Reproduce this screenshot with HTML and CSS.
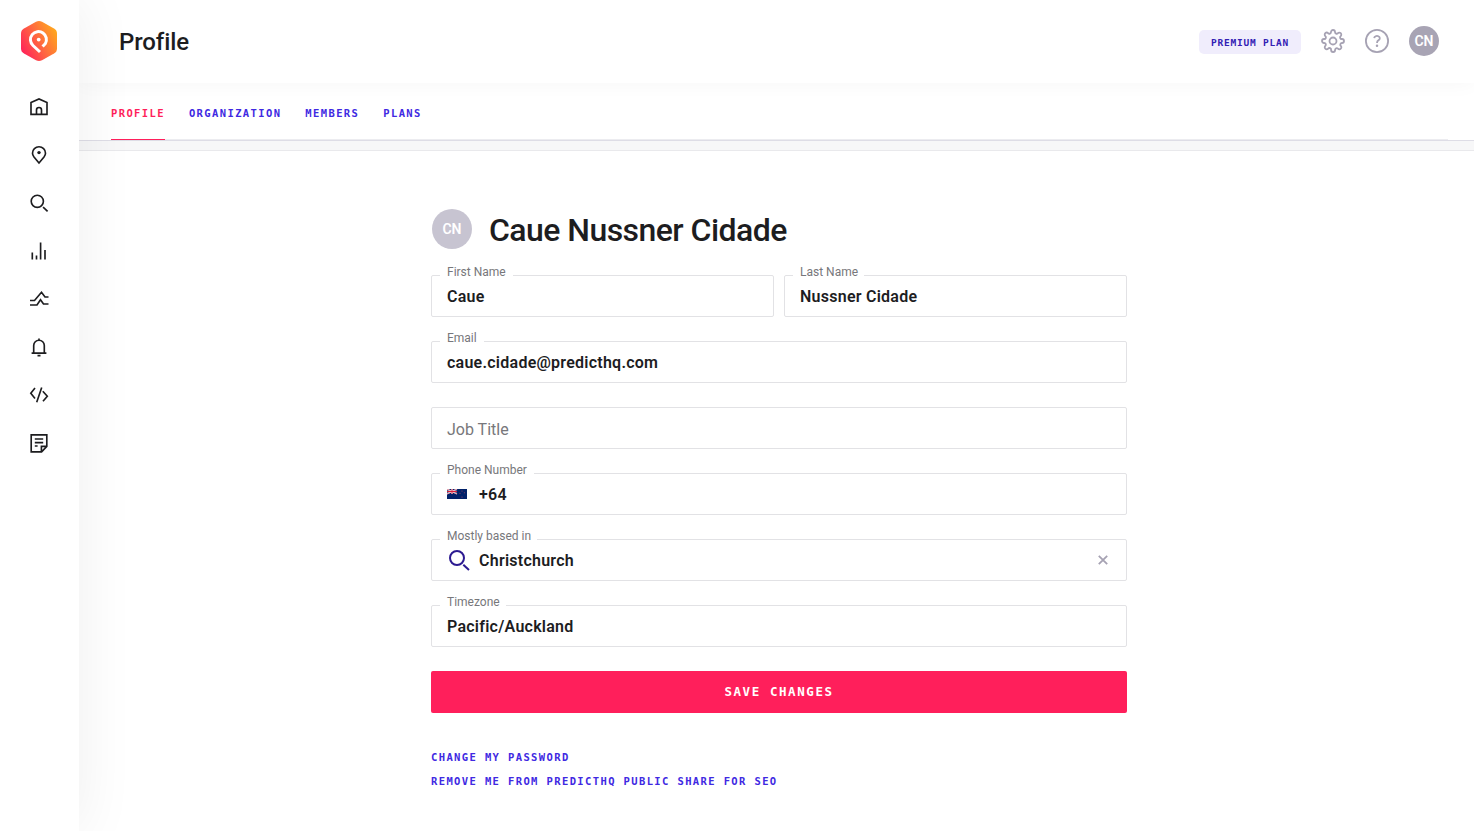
FILE: index.html
```html
<!DOCTYPE html>
<html lang="en">
<head>
<meta charset="utf-8">
<title>Profile</title>
<link rel="stylesheet" href="styles.css">
</head>
<body>
<div class="app">
  <aside class="sidebar">
    <svg class="logo" viewBox="0 0 36 40">
      <defs><linearGradient id="brand" x1="0" y1="0.8" x2="1" y2="0.2"><stop offset="0" stop-color="#ff1f5b"/><stop offset="0.5" stop-color="#ff6840"/><stop offset="1" stop-color="#ffac1c"/></linearGradient></defs>
      <path d="M15 .8Q18-.8 21 .8L33 7.5Q36 9.2 36 12.5V27.5Q36 30.8 33 32.5L21 39.2Q18 40.8 15 39.2L3 32.5Q0 30.8 0 27.5V12.5Q0 9.2 3 7.5Z" fill="url(#brand)"/>
      <path d="M19 31L12 24.500A8 8 0 1 1 24.300 22.700L21.600 25.600" fill="none" stroke="#fff" stroke-width="3"/>
      <circle cx="17.7" cy="18.6" r="1.9" fill="#fff"/>
    </svg>
    <nav class="menu">
      <svg viewBox="0 0 24 24"><path d="M4 7.6L12 4l8 3.600V19.300H4ZM9.500 19.200V15a2.500 2.500 0 0 1 5 0v4.200"/></svg>
      <svg viewBox="0 0 24 24"><path d="M12 20L7 14Q5.500 12 5.500 10.200a6.500 6.500 0 0 1 13 0Q18.500 12 17 14Z"/><circle cx="12" cy="9.600" r="1.700" fill="#1d1d1f" stroke="none"/></svg>
      <svg viewBox="0 0 24 24"><circle cx="10.300" cy="10.300" r="6.100"/><path d="M16.100 16.100L20.600 20.400"/></svg>
      <svg viewBox="0 0 24 24"><path d="M5.300 13.500V20.500M9.500 16.500V20.500M13.600 3.600V20.500M18 11.100V20.500"/></svg>
      <svg viewBox="0 0 24 24"><path d="M3 13.500H7.500L14.500 5.300L18 10H21.500M3 18H10L13.500 12.700L16.500 17H21.500"/></svg>
      <svg viewBox="0 0 24 24"><path d="M4.600 18.100H19.400M6.700 18V10.500a5.300 5.300 0 0 1 10.600 0V18M12 3.400V5.300M10.500 20.600H13.500"/></svg>
      <svg viewBox="0 0 24 24"><path d="M8 5L3.800 10.200L8 15.400M14.700 4.600L9.700 19.200M15.800 8.200L20.300 13.200L16 18.200"/></svg>
      <svg viewBox="0 0 24 24"><path d="M4.200 3.800H19.800V15.300L14.600 20.800H4.200ZM14.400 20.600V15.300H19.700M7.800 8H16.200M7.800 11.600H16.200M7.800 15H10.600"/></svg>
    </nav>
  </aside>
  <main class="main">
    <header class="topbar">
      <h1 class="page-title">Profile</h1>
      <span class="plan">PREMIUM PLAN</span>
      <svg class="tool" viewBox="0 0 24 24"><circle cx="12" cy="12" r="3.500"/><path d="M19.400 15a1.650 1.650 0 0 0 .33 1.820l.06.06a2 2 0 1 1-2.830 2.830l-.06-.06a1.650 1.650 0 0 0-2.800 1.170V21a2 2 0 0 1-4 0v-.09a1.650 1.650 0 0 0-2.900-1.260l-.06.06a2 2 0 1 1-2.830-2.830l.06-.06A1.650 1.650 0 0 0 3.090 14H3a2 2 0 0 1 0-4h.09a1.650 1.650 0 0 0 1.260-2.900l-.06-.06a2 2 0 1 1 2.830-2.830l.06.06A1.650 1.650 0 0 0 10 3.090V3a2 2 0 0 1 4 0v.09a1.650 1.650 0 0 0 2.820 1.180l.06-.06a2 2 0 1 1 2.830 2.830l-.06.06A1.650 1.650 0 0 0 20.910 10H21a2 2 0 0 1 0 4h-.09A1.650 1.650 0 0 0 19.400 15Z"/></svg>
      <svg class="tool" viewBox="0 0 24 24"><circle cx="12" cy="12" r="11.100"/><path d="M9.200 9.100a2.800 2.300 0 1 1 4.400 2Q12 12 12 14"/><circle cx="12" cy="16.700" r="1.250" fill="#a6a2b3" stroke="none"/></svg>
      <span class="avatar avatar-small">CN</span>
    </header>
    <div class="tabbar">
      <nav class="tabs">
        <a class="tab active">PROFILE</a>
        <a class="tab">ORGANIZATION</a>
        <a class="tab">MEMBERS</a>
        <a class="tab">PLANS</a>
      </nav>
    </div>
    <div class="band"></div>
    <section class="profile">
      <div class="person"><span class="avatar">CN</span><h2 class="name">Caue Nussner Cidade</h2></div>
      <form class="form">
        <div class="pair">
          <div class="field"><label class="label w-first">First Name</label><span class="value">Caue</span></div>
          <div class="field"><label class="label w-last">Last Name</label><span class="value">Nussner Cidade</span></div>
        </div>
        <div class="field"><label class="label w-email">Email</label><span class="value">caue.cidade@predicthq.com</span></div>
        <div class="field"><span class="placeholder">Job Title</span></div>
        <div class="field"><label class="label w-phone">Phone Number</label>
          <svg class="flag" viewBox="0 0 20 10"><path fill="#012169" d="M0 0h20v10H0z"/><path d="M0 0L10 5M10 0L0 5" stroke="#fff" stroke-width="1.200"/><path d="M0 0L10 5M10 0L0 5" stroke="#d6203b" stroke-width=".5"/><path d="M5 0V5M0 2.500H10" stroke="#fff" stroke-width="1.600"/><path d="M5 0V5M0 2.500H10" stroke="#d6203b" stroke-width="1"/><g fill="#bb4564"><circle cx="15" cy="1.900" r=".5"/><circle cx="13" cy="4.200" r=".5"/><circle cx="17.300" cy="3.800" r=".5"/><circle cx="15" cy="8" r=".55"/></g></svg>
          <span class="value">+64</span></div>
        <div class="field"><label class="label w-based">Mostly based in</label>
          <svg class="search" viewBox="0 0 24 24"><circle cx="10" cy="10" r="7"/><path d="M16.300 16.800L22 22"/></svg>
          <span class="value">Christchurch</span>
          <svg class="clear" viewBox="0 0 10 10"><path d="M.8.800L9.200 9.200M9.200.800L.8 9.200"/></svg></div>
        <div class="field"><label class="label w-zone">Timezone</label><span class="value">Pacific/Auckland</span></div>
        <button class="save" type="button">SAVE CHANGES</button>
      </form>
      <div class="links"><a>CHANGE MY PASSWORD</a><a>REMOVE ME FROM PREDICTHQ PUBLIC SHARE FOR SEO</a></div>
    </section>
  </main>
</div>
</body>
</html>
```

FILE: styles.css
```css
* { box-sizing: border-box; }
body { margin: 0; background: #fff; color: #1d1d1f; font-family: Roboto, "Liberation Sans", sans-serif; }
.app { display: flex; height: 831px; overflow: hidden; }
.sidebar { position: relative; z-index: 1; width: 79px; flex: none; display: flex; flex-direction: column; align-items: center; padding: 21px 1px 0 0; background: #fff; box-shadow: 0 0 60px rgba(0, 0, 0, .07); }
.logo { width: 36px; height: 40px; }
.menu { display: flex; flex-direction: column; gap: 24px; margin-top: 34px; }
.menu svg { width: 24px; height: 24px; fill: none; stroke: #1d1d1f; stroke-width: 1.65; }
.main { flex: 1; min-width: 0; }
.topbar { height: 83px; display: flex; align-items: center; padding: 0 35px 1px 40px; box-shadow: 0 0 20px rgba(0, 0, 0, .04); }
.page-title { margin: 2px auto 0 0; font-size: 24px; line-height: 32px; font-weight: 500; letter-spacing: -.1px; }
.plan { width: 102px; height: 24px; margin: 2px 20px 0 0; border-radius: 5px; background: #f0edfc; color: #3320b4; font: bold 9.5px/25px "DejaVu Sans Mono", monospace; letter-spacing: .78px; text-align: center; white-space: nowrap; }
.tool { width: 24px; height: 24px; margin-right: 20px; overflow: visible; fill: none; stroke: #a6a2b3; stroke-width: 1.8; }
.avatar { width: 40px; height: 40px; flex: none; border-radius: 50%; background: #c7c4d1; color: #fff; font-size: 14px; font-weight: 600; line-height: 40px; text-align: center; }
.avatar-small { width: 30px; height: 30px; line-height: 30px; background: #a8a4b4; }
.tabbar { height: 58px; padding: 0 26px 0 32px; border-bottom: 1px solid #dedde6; }
.tabs { height: 57px; display: flex; gap: 24px; border-bottom: 1px solid #ececf0; }
.tab { height: 57px; color: #4029e2; font: bold 10.5px/60px "DejaVu Sans Mono", monospace; letter-spacing: 1.38px; }
.tab.active { color: #ff1f5b; border-bottom: 1px solid #ff1f5b; }
.band { height: 10px; background: #f7f7f8; border-bottom: 1px solid #e9e9ec; }
.profile { width: 696px; margin-left: 352px; padding-top: 58px; }
.person { display: flex; align-items: center; gap: 17px; height: 40px; padding-left: 1px; }
.name { margin: 2px 0 0; font-size: 32px; line-height: 40px; font-weight: 550; white-space: nowrap; letter-spacing: -.55px; }
.form { display: flex; flex-direction: column; gap: 24px; margin-top: 26px; }
.pair { display: grid; grid-template-columns: 1fr 1fr; gap: 10px; }
.field { position: relative; height: 42px; display: flex; align-items: center; padding: 0 15px; border: 1px solid #e2e2e5; border-radius: 2px; }
.label { position: absolute; left: 8px; top: -12px; height: 16px; padding-left: 7px; background: #fff; color: #77777b; font-size: 12px; line-height: 16px; white-space: nowrap; }
.w-first { width: 73px; }
.w-last { width: 71px; }
.w-email { width: 44px; }
.w-phone { width: 94px; }
.w-based { width: 97px; }
.w-zone { width: 66px; }
.value { padding-top: 2px; font-size: 16px; line-height: 24px; font-weight: 600; white-space: nowrap; letter-spacing: .25px; }
.placeholder { padding-top: 4px; color: #77777b; font-size: 16px; line-height: 24px; }
.flag { width: 20px; height: 10px; margin-right: 12px; }
.search { width: 24px; height: 24px; margin-right: 8px; fill: none; stroke: #2c1a91; stroke-width: 2; }
.clear { width: 10px; height: 10px; margin: 0 3px 0 auto; fill: none; stroke: #a6a2b3; stroke-width: 1.8; }
.save { height: 42px; border: 0; padding: 0; border-radius: 2px; background: #ff1f5b; color: #fff; font: bold 12.5px/42px "DejaVu Sans Mono", monospace; letter-spacing: 1.57px; }
.links { display: flex; flex-direction: column; margin-top: 32px; color: #4029e2; font: bold 10.5px/24px "DejaVu Sans Mono", monospace; letter-spacing: 1.38px; }
```
